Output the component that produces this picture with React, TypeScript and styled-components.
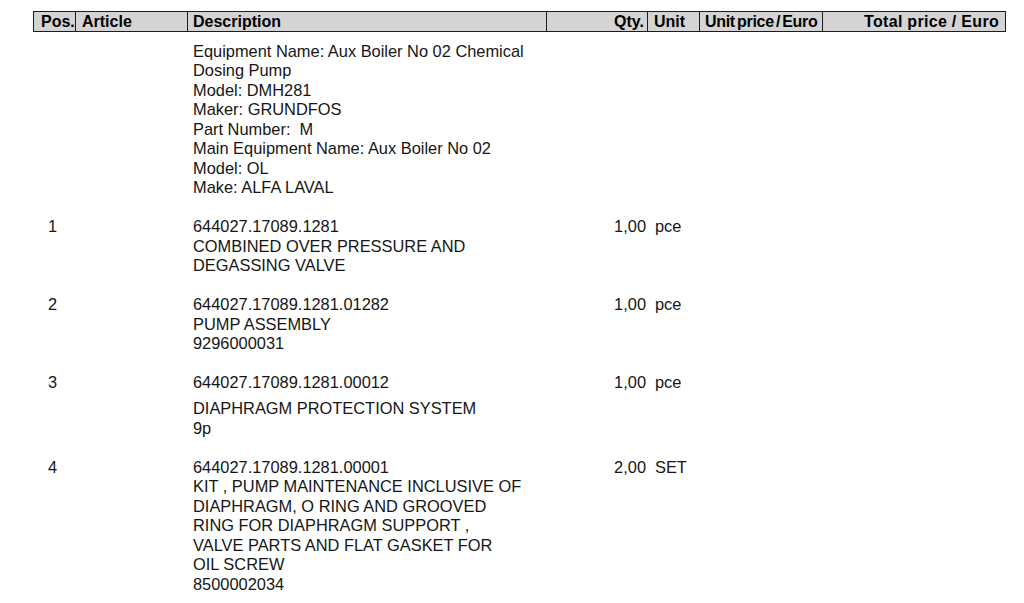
import React from "react";
import styled, { createGlobalStyle } from "styled-components";

const GlobalStyle = createGlobalStyle`
  html, body {
    margin: 0;
    padding: 0;
    background: #ffffff;
  }
  body {
    font-family: "Liberation Sans", Arial, sans-serif;
    color: #111111;
  }
`;

const COLUMNS = "43px 112px 359px 101px 52px 123px 183px";

const Page = styled.div`
  width: 1024px;
  height: 603px;
  overflow: hidden;
  padding: 11px 0 0 33px;
  box-sizing: border-box;
`;

const HeaderRow = styled.div`
  display: grid;
  grid-template-columns: ${COLUMNS};
  width: 973px;
  box-sizing: border-box;
  background: #d4d4d4;
  border-top: 1px solid #1c1c1c;
  border-bottom: 1px solid #1c1c1c;
`;

const HeaderCell = styled.div<{ $align?: "left" | "right"; $pl?: number; $pr?: number; $tight?: boolean; $wide?: boolean; $first?: boolean }>`
  height: 19px;
  line-height: 19px;
  font-size: 16px;
  font-weight: 700;
  color: #000000;
  white-space: nowrap;
  overflow: hidden;
  box-sizing: border-box;
  text-align: ${(p) => p.$align ?? "left"};
  padding-left: ${(p) => p.$pl ?? 0}px;
  padding-right: ${(p) => p.$pr ?? 0}px;
  border-right: 1px solid #1c1c1c;
  ${(p) => (p.$first ? "border-left: 1px solid #1c1c1c;" : "")}
  ${(p) => (p.$tight ? "letter-spacing: -0.3px; word-spacing: -2px;" : "")}
  ${(p) => (p.$wide ? "letter-spacing: 0.3px;" : "")}
`;

const Body = styled.div`
  display: flex;
  flex-direction: column;
  gap: 19.5px;
  padding-top: 9.5px;
`;

const ItemRow = styled.div`
  display: grid;
  grid-template-columns: ${COLUMNS};
  width: 973px;
  font-size: 16.4px;
  line-height: 19.5px;
  color: #161616;
`;

const PosCell = styled.div`
  text-align: right;
  padding-right: 19px;
`;

const ArticleCell = styled.div``;

const DescCell = styled.div`
  padding-left: 5px;
  display: flex;
  flex-direction: column;
`;

const DescLine = styled.div<{ $gap?: number }>`
  white-space: nowrap;
  margin-top: ${(p) => p.$gap ?? 0}px;
`;

const QtyCell = styled.div`
  text-align: right;
  padding-right: 2px;
  white-space: nowrap;
`;

const UnitCell = styled.div`
  padding-left: 7px;
  white-space: nowrap;
`;

type Line = { text: string; gap?: number };
type Item = { pos: string; lines: Line[]; qty: string; unit: string };

const items: Item[] = [
  {
    pos: "",
    qty: "",
    unit: "",
    lines: [
      { text: "Equipment Name: Aux Boiler No 02 Chemical" },
      { text: "Dosing Pump" },
      { text: "Model: DMH281" },
      { text: "Maker: GRUNDFOS" },
      { text: "Part Number:\u00a0 M" },
      { text: "Main Equipment Name: Aux Boiler No 02" },
      { text: "Model: OL" },
      { text: "Make: ALFA LAVAL" },
    ],
  },
  {
    pos: "1",
    qty: "1,00",
    unit: "pce",
    lines: [
      { text: "644027.17089.1281" },
      { text: "COMBINED OVER PRESSURE AND" },
      { text: "DEGASSING VALVE" },
    ],
  },
  {
    pos: "2",
    qty: "1,00",
    unit: "pce",
    lines: [
      { text: "644027.17089.1281.01282" },
      { text: "PUMP ASSEMBLY" },
      { text: "9296000031" },
    ],
  },
  {
    pos: "3",
    qty: "1,00",
    unit: "pce",
    lines: [
      { text: "644027.17089.1281.00012" },
      { text: "DIAPHRAGM PROTECTION SYSTEM", gap: 6.5 },
      { text: "9p" },
    ],
  },
  {
    pos: "4",
    qty: "2,00",
    unit: "SET",
    lines: [
      { text: "644027.17089.1281.00001" },
      { text: "KIT , PUMP MAINTENANCE INCLUSIVE OF" },
      { text: "DIAPHRAGM, O RING AND GROOVED" },
      { text: "RING FOR DIAPHRAGM SUPPORT ," },
      { text: "VALVE PARTS AND FLAT GASKET FOR" },
      { text: "OIL SCREW" },
      { text: "8500002034" },
    ],
  },
];

export default function App() {
  return (
    <>
      <GlobalStyle />
      <Page>
        <HeaderRow>
          <HeaderCell $first $pl={7}>Pos.</HeaderCell>
          <HeaderCell $pl={6}>Article</HeaderCell>
          <HeaderCell $pl={5}>Description</HeaderCell>
          <HeaderCell $align="right" $pr={3}>Qty.</HeaderCell>
          <HeaderCell $pl={6}>Unit</HeaderCell>
          <HeaderCell $pl={5} $tight>Unit price / Euro</HeaderCell>
          <HeaderCell $align="right" $pr={6} $wide>Total price / Euro</HeaderCell>
        </HeaderRow>
        <Body>
          {items.map((it, i) => (
            <ItemRow key={i}>
              <PosCell>{it.pos}</PosCell>
              <ArticleCell />
              <DescCell>
                {it.lines.map((l, j) => (
                  <DescLine key={j} $gap={l.gap}>
                    {l.text}
                  </DescLine>
                ))}
              </DescCell>
              <QtyCell>{it.qty}</QtyCell>
              <UnitCell>{it.unit}</UnitCell>
              <div />
              <div />
            </ItemRow>
          ))}
        </Body>
      </Page>
    </>
  );
}
